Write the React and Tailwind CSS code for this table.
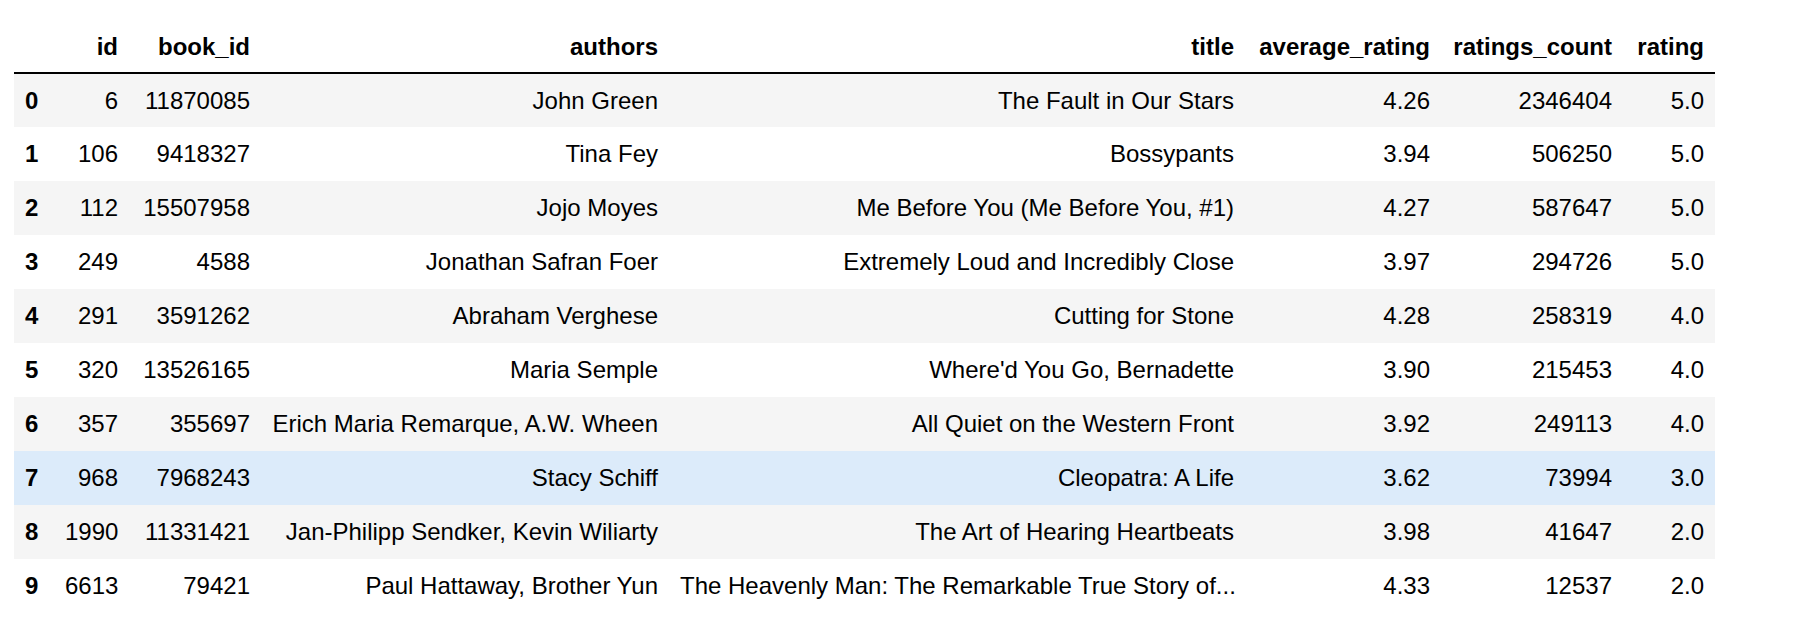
import React from 'react'

const columns = [
  { key: 'id', label: 'id', w: 'w-[75px]' },
  { key: 'book_id', label: 'book_id', w: 'w-[132px]' },
  { key: 'authors', label: 'authors', w: 'w-[408px]' },
  { key: 'title', label: 'title', w: 'w-[576px]' },
  { key: 'average_rating', label: 'average_rating', w: 'w-[196px]' },
  { key: 'ratings_count', label: 'ratings_count', w: 'w-[182px]' },
  { key: 'rating', label: 'rating', w: 'w-[92px]' },
]

const rows = [
  [6, 11870085, 'John Green', 'The Fault in Our Stars', '4.26', 2346404, '5.0'],
  [106, 9418327, 'Tina Fey', 'Bossypants', '3.94', 506250, '5.0'],
  [112, 15507958, 'Jojo Moyes', 'Me Before You (Me Before You, #1)', '4.27', 587647, '5.0'],
  [249, 4588, 'Jonathan Safran Foer', 'Extremely Loud and Incredibly Close', '3.97', 294726, '5.0'],
  [291, 3591262, 'Abraham Verghese', 'Cutting for Stone', '4.28', 258319, '4.0'],
  [320, 13526165, 'Maria Semple', "Where'd You Go, Bernadette", '3.90', 215453, '4.0'],
  [357, 355697, 'Erich Maria Remarque, A.W. Wheen', 'All Quiet on the Western Front', '3.92', 249113, '4.0'],
  [968, 7968243, 'Stacy Schiff', 'Cleopatra: A Life', '3.62', 73994, '3.0'],
  [1990, 11331421, 'Jan-Philipp Sendker, Kevin Wiliarty', 'The Art of Hearing Heartbeats', '3.98', 41647, '2.0'],
  [6613, 79421, 'Paul Hattaway, Brother Yun', 'The Heavenly Man: The Remarkable True Story of...', '4.33', 12537, '2.0'],
]

// row under the mouse pointer in the screenshot
const HOVER_ROW = 7

export default function App() {
  return (
    <div className="min-h-screen bg-white pt-[22px] pl-[14px] font-['Liberation_Sans',Arial,sans-serif] text-[24px] text-black">
      <table className="table-fixed border-collapse w-[1701px]">
        <thead>
          <tr className="h-[51px] border-b-2 border-black">
            <th className="w-[40px]"></th>
            {columns.map((c) => (
              <th key={c.key} className={`${c.w} px-[11px] text-right font-bold whitespace-nowrap`}>
                {c.label}
              </th>
            ))}
          </tr>
        </thead>
        <tbody>
          {rows.map((r, i) => {
            const bg = i === HOVER_ROW ? 'bg-[#dcebfa]' : i % 2 === 0 ? 'bg-[#f5f5f5]' : 'bg-white'
            return (
              <tr key={i} className={`h-[54px] ${bg}`}>
                <th className="pl-[11px] text-left font-bold">{i}</th>
                {r.map((v, j) => (
                  <td key={j} className="px-[11px] text-right whitespace-nowrap">
                    {v}
                  </td>
                ))}
              </tr>
            )
          })}
        </tbody>
      </table>
    </div>
  )
}
